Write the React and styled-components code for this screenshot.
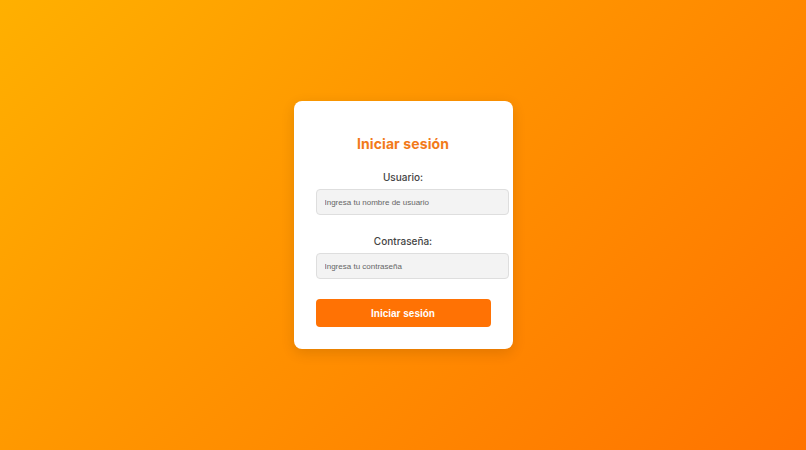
import React from 'react';
import styled, { createGlobalStyle } from 'styled-components';

const GlobalStyle = createGlobalStyle`
  html, body {
    margin: 0;
    padding: 0;
    height: 100%;
  }
  #root {
    height: 100%;
  }
`;

const Page = styled.div`
  min-height: 100vh;
  display: flex;
  align-items: center;
  justify-content: center;
  background: linear-gradient(135deg, #ffb000 0%, #ff9000 50%, #ff7300 100%);
  font-family: 'Inter', 'Noto Sans', sans-serif;
`;

const Card = styled.form`
  width: 175px;
  padding: 22px;
  background: #fff;
  border-radius: 8px;
  box-shadow: 0 4px 14px rgba(0, 0, 0, 0.12);
  display: flex;
  flex-direction: column;
`;

const Title = styled.h2`
  margin: 12px 0 19px;
  text-align: center;
  font-size: 14px;
  font-weight: 700;
  color: #f27a1a;
  letter-spacing: 0.1px;
`;

const Field = styled.div`
  display: flex;
  flex-direction: column;
  margin-bottom: ${(p) => p.$gap}px;
`;

const Label = styled.label`
  text-align: center;
  font-size: 10px;
  font-weight: 500;
  color: #444;
  margin-bottom: 6px;
`;

const Input = styled.input`
  width: 175px;
  box-sizing: content-box;
  height: 24px;
  padding: 0 8px;
  border: 1px solid #dedede;
  border-radius: 4px;
  background: #f3f3f3;
  font-family: 'Liberation Sans', Arial, sans-serif;
  font-size: 8px;
  color: #333;
  outline: none;

  &::placeholder {
    color: #666;
  }
`;

const Button = styled.button`
  height: 28px;
  border: none;
  border-radius: 4px;
  background: #ff7204;
  color: #fff;
  font-family: 'Liberation Sans', Arial, sans-serif;
  font-weight: 700;
  font-size: 10px;
  cursor: pointer;
`;

export default function App() {
  return (
    <>
      <GlobalStyle />
      <Page>
        <Card onSubmit={(e) => e.preventDefault()}>
          <Title>Iniciar sesión</Title>
          <Field $gap={20}>
            <Label>Usuario:</Label>
            <Input type="text" placeholder="Ingresa tu nombre de usuario" />
          </Field>
          <Field $gap={20}>
            <Label>Contraseña:</Label>
            <Input type="password" placeholder="Ingresa tu contraseña" />
          </Field>
          <Button type="submit">Iniciar sesión</Button>
        </Card>
      </Page>
    </>
  );
}
